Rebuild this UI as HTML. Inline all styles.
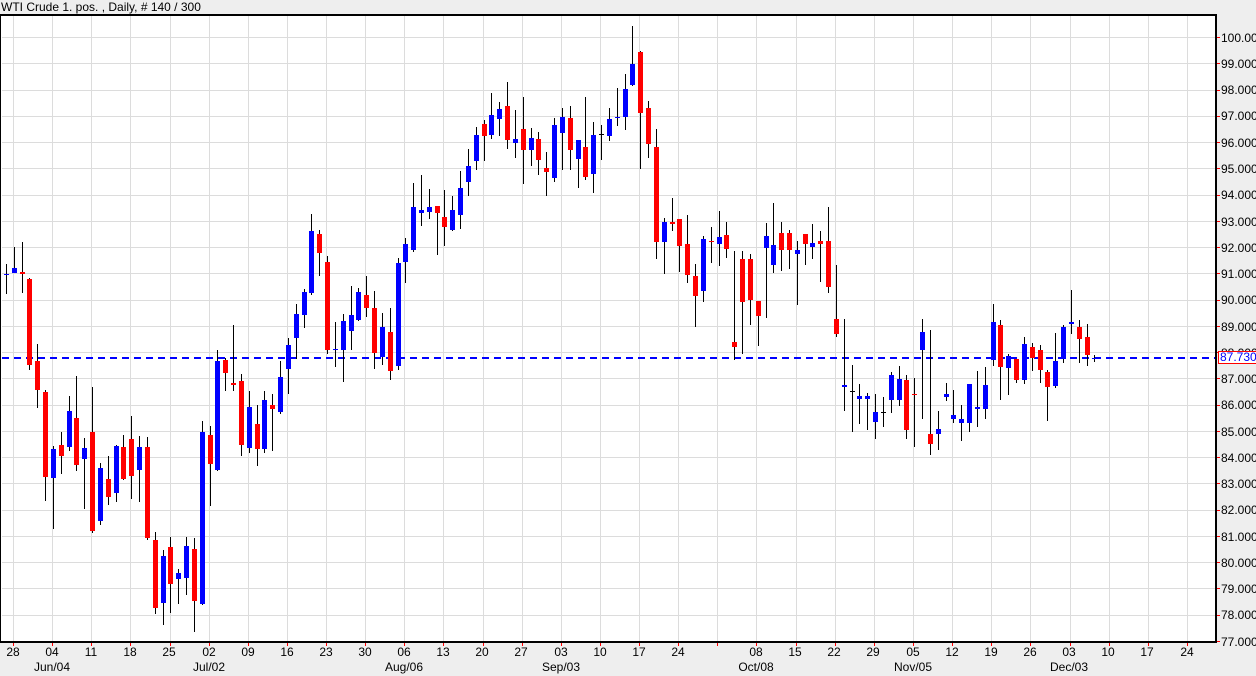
<!DOCTYPE html>
<html><head><meta charset="utf-8">
<style>
html,body{margin:0;padding:0;background:#eeeeee;width:1256px;height:676px;overflow:hidden;font-family:"Liberation Sans",sans-serif;}
#t{position:absolute;left:1px;top:0;font-size:12px;line-height:15px;color:#000;}
svg{position:absolute;left:0;top:0;}
.pl{position:absolute;left:1221px;font-size:12px;line-height:12px;color:#000;white-space:nowrap;}
.dl{position:absolute;top:645px;font-size:12px;width:30px;margin-left:-15px;text-align:center;}
.ml{position:absolute;top:660px;font-size:12px;width:60px;margin-left:-30px;text-align:center;}
#cur{position:absolute;left:1218px;top:351px;width:40px;height:11px;border:1px solid #f00;background:#fff;color:#00f;font-size:12px;line-height:11px;padding-left:1px;}
</style></head><body>
<div id="t">WTI Crude 1. pos. , Daily, # 140 / 300</div>
<svg id="s" width="1256" height="676" xmlns="http://www.w3.org/2000/svg"></svg>
<div class="pl" style="top:32px">100.0000</div><div class="pl" style="top:58px">99.0000</div><div class="pl" style="top:84px">98.0000</div><div class="pl" style="top:110px">97.0000</div><div class="pl" style="top:137px">96.0000</div><div class="pl" style="top:163px">95.0000</div><div class="pl" style="top:189px">94.0000</div><div class="pl" style="top:216px">93.0000</div><div class="pl" style="top:242px">92.0000</div><div class="pl" style="top:268px">91.0000</div><div class="pl" style="top:294px">90.0000</div><div class="pl" style="top:321px">89.0000</div><div class="pl" style="top:347px">88.0000</div><div class="pl" style="top:373px">87.0000</div><div class="pl" style="top:399px">86.0000</div><div class="pl" style="top:426px">85.0000</div><div class="pl" style="top:452px">84.0000</div><div class="pl" style="top:478px">83.0000</div><div class="pl" style="top:504px">82.0000</div><div class="pl" style="top:531px">81.0000</div><div class="pl" style="top:557px">80.0000</div><div class="pl" style="top:583px">79.0000</div><div class="pl" style="top:609px">78.0000</div><div class="pl" style="top:636px">77.0000</div>
<div id="cur">87.7300</div>
<div class="dl" style="left:13px">28</div><div class="dl" style="left:52px">04</div><div class="dl" style="left:91px">11</div><div class="dl" style="left:130px">18</div><div class="dl" style="left:169px">25</div><div class="dl" style="left:209px">02</div><div class="dl" style="left:248px">09</div><div class="dl" style="left:287px">16</div><div class="dl" style="left:326px">23</div><div class="dl" style="left:365px">30</div><div class="dl" style="left:404px">06</div><div class="dl" style="left:443px">13</div><div class="dl" style="left:482px">20</div><div class="dl" style="left:521px">27</div><div class="dl" style="left:561px">03</div><div class="dl" style="left:600px">10</div><div class="dl" style="left:639px">17</div><div class="dl" style="left:678px">24</div><div class="dl" style="left:756px">08</div><div class="dl" style="left:795px">15</div><div class="dl" style="left:834px">22</div><div class="dl" style="left:873px">29</div><div class="dl" style="left:913px">05</div><div class="dl" style="left:952px">12</div><div class="dl" style="left:991px">19</div><div class="dl" style="left:1030px">26</div><div class="dl" style="left:1069px">03</div><div class="dl" style="left:1108px">10</div><div class="dl" style="left:1147px">17</div><div class="dl" style="left:1187px">24</div>
<div class="ml" style="left:52px">Jun/04</div><div class="ml" style="left:209px">Jul/02</div><div class="ml" style="left:404px">Aug/06</div><div class="ml" style="left:561px">Sep/03</div><div class="ml" style="left:756px">Oct/08</div><div class="ml" style="left:913px">Nov/05</div><div class="ml" style="left:1069px">Dec/03</div>
<script>
var D=[
['b',274,274,264,294],['b',268,273,247,273],['r',272,274,242,293],['r',279,365,278,370],['r',361,390,344,408],['r',392,477,390,501],['b',449,478,446,529],['r',445,456,432,474],['b',411,447,396,451],['r',418,465,376,471],
['b',448,459,438,509],['r',432,531,387,533],['b',468,521,463,525],['r',479,497,456,505],['b',446,493,445,502],['r',447,479,435,480],['r',439,476,416,499],['b',447,470,436,502],['r',447,538,437,540],['r',540,608,532,614],
['b',556,603,550,625],['r',547,584,537,613],['b',573,579,569,604],['b',546,578,537,595],['r',549,601,538,632],['b',432,604,421,605],['r',435,464,426,506],['b',361,470,350,471],['r',360,373,358,391],['r',383,385,325,391],
['r',381,445,374,456],['b',407,448,391,453],['r',424,449,405,466],['b',400,449,391,453],['r',405,409,394,451],['b',377,412,361,414],['b',345,369,338,394],['b',314,338,304,359],['b',292,315,289,328],['b',231,293,214,295],
['r',234,253,230,276],['r',262,350,256,354],['b',349,350,322,367],['b',321,350,314,382],['b',315,331,286,350],['b',292,320,288,321],['r',295,308,276,317],['r',308,353,291,369],['b',327,357,313,365],['r',332,371,308,380],
['b',263,366,258,370],['b',244,262,238,283],['b',207,250,183,252],['b',210,213,175,226],['b',207,212,189,219],['r',206,213,206,255],['r',217,227,190,246],['b',210,230,196,231],['b',188,215,171,229],['b',166,182,149,196],
['b',135,161,127,170],['r',124,136,120,161],['b',115,135,93,139],['b',109,119,102,136],['r',106,140,82,149],['b',139,143,110,158],['r',129,150,97,184],['b',138,150,128,166],['r',139,160,132,175],['r',168,172,152,196],
['b',125,178,118,182],['b',117,133,108,170],['r',118,150,106,170],['b',140,159,140,188],['r',147,177,97,180],['b',135,174,122,193],['k',134,134,125,160],['b',119,136,108,141],['b',117,118,88,126],['b',89,117,74,130],
['b',64,85,26,86],['r',52,113,51,169],['r',108,144,101,158],['r',147,242,129,259],['b',222,242,218,274],['r',222,224,198,231],['r',219,246,219,272],['r',244,275,215,283],['r',276,296,264,327],['b',239,291,236,302],
['r',241,242,227,263],['b',237,244,211,266],['r',235,249,222,258],['r',342,347,251,360],['r',259,302,251,354],['r',259,300,254,325],['r',301,316,301,346],['b',236,248,223,318],['b',245,265,203,273],['r',233,250,222,271],
['r',233,250,230,269],['b',250,254,241,305],['r',234,244,234,265],['b',243,247,224,259],['r',241,244,231,282],['r',241,287,207,293],['r',319,334,265,337],['b',385,387,319,411],['k',391,392,365,432],['b',396,399,384,424],
['b',396,399,393,430],['b',412,422,394,439],['k',412,413,397,427],['b',375,400,372,413],['b',379,400,366,406],['r',380,430,375,439],['r',394,395,378,447],['b',332,350,319,419],['r',434,444,330,455],['b',429,434,411,450],
['b',394,397,383,401],['b',415,419,390,423],['b',419,423,405,441],['b',384,423,384,432],['b',407,409,371,427],['b',385,409,367,419],['b',322,360,304,366],['r',325,367,320,400],['b',356,368,354,395],['r',359,380,359,383],
['b',344,380,337,384],['r',347,358,343,371],['r',350,370,345,383],['r',372,387,370,421],['b',361,386,333,388],['b',327,359,325,363],['b',322,324,290,334],['r',327,339,320,363],['r',337,355,324,366],['b',358,359,355,362]
];
var s='';
for(var p=77;p<=100;p++){var y=Math.round(37+(100-p)*26.26)+0.5;
 s+='<line x1="2" x2="1216" y1="'+y+'" y2="'+y+'" stroke="#dcdcdc" stroke-width="1"/>';
 s+='<line x1="1216" x2="1220" y1="'+y+'" y2="'+y+'" stroke="#f00" stroke-width="1"/>';}
for(var k=0;k<=30;k++){var x=Math.round(13+k*39.13)+0.5;
 s+='<line x1="'+x+'" x2="'+x+'" y1="16" y2="641" stroke="#dcdcdc" stroke-width="1"/>';
 s+='<line x1="'+x+'" x2="'+x+'" y1="642" y2="646" stroke="#f00" stroke-width="1"/>';}
s+='<line x1="2" x2="1216" y1="358" y2="358" stroke="#0000ff" stroke-width="2" stroke-dasharray="7,5"/>';
for(var i=0;i<D.length;i++){var d=D[i];var xc=Math.round(6+7.83*i);
 s+='<line x1="'+(xc+0.5)+'" x2="'+(xc+0.5)+'" y1="'+d[3]+'" y2="'+d[4]+'" stroke="#000" stroke-width="1"/>';
 var c=d[0]=='b'?'#0000ff':(d[0]=='r'?'#ff0000':'#000');
 var h=Math.max(d[2]-d[1],1);
 s+='<rect x="'+(xc-2)+'" y="'+d[1]+'" width="5" height="'+h+'" fill="'+c+'"/>';}
s+='<rect x="0" y="15" width="1216" height="627" fill="none" stroke="#000" stroke-width="2"/>';
var svg=document.getElementById('s');
svg.innerHTML='<rect x="1" y="16" width="1215" height="625" fill="#fff"/>'+s;
</script>
</body></html>
